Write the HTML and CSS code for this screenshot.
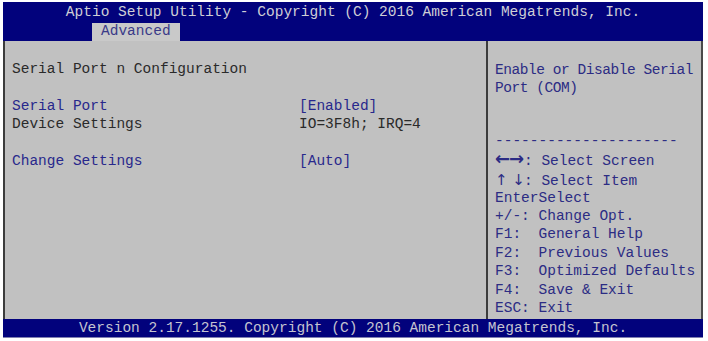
FILE: index.html
```html
<!DOCTYPE html>
<html lang="en">
<head>
  <meta charset="UTF-8">
  <title>Aptio Setup Utility - Serial Port</title>
  <link rel="stylesheet" href="styles.css">
</head>
<body>

<div class="screen">
  <!-- Header -->
  <div class="header">
    <div class="title">Aptio Setup Utility - Copyright (C) 2016 American Megatrends, Inc.</div>
    <div class="tabs">
      <span class="tab">Advanced</span>
    </div>
  </div>

  <!-- Main area -->
  <div class="main">
    <div class="left">
      <div class="line text">Serial Port n Configuration</div>
      <div class="line"></div>
      <div class="line row"><span class="label item">Serial Port</span><span class="value item">[Enabled]</span></div>
      <div class="line row"><span class="label text">Device Settings</span><span class="value text">IO=3F8h; IRQ=4</span></div>
      <div class="line"></div>
      <div class="line row"><span class="label item">Change Settings</span><span class="value item">[Auto]</span></div>
    </div>
    <div class="right">
      <div class="line help">Enable or Disable Serial</div>
      <div class="line help">Port (COM)</div>
      <div class="line gap"></div>
      <div class="line gap"></div>
      <div class="line">---------------------</div>
      <div class="line"><span class="arrows">&larr;&rarr;</span>: Select Screen</div>
      <div class="line tall"><span class="arrows thin">&uarr; &darr;</span>: Select Item</div>
      <div class="line">EnterSelect</div>
      <div class="line">+/-: Change Opt.</div>
      <div class="line">F1:  General Help</div>
      <div class="line">F2:  Previous Values</div>
      <div class="line">F3:  Optimized Defaults</div>
      <div class="line">F4:  Save &amp; Exit</div>
      <div class="line">ESC: Exit</div>
    </div>
  </div>

  <!-- Footer -->
  <div class="footer">Version 2.17.1255. Copyright (C) 2016 American Megatrends, Inc.</div>
</div>

</body>
</html>
```

FILE: styles.css
```css
/* General Styles */
* {
  box-sizing: border-box;
}
body {
  margin: 0;
  background-color: #ffffff;
  font-family: "Liberation Mono", "Courier New", monospace;
  font-size: 14.5px;
}

/* Whole BIOS screen */
.screen {
  width: 700px;
  height: 336px;
  margin: 2px 0 0 3px;
  display: flex;
  flex-direction: column;
}

/* Header */
.header {
  background-color: #02027c;
  height: 39px;
  display: flex;
  flex-direction: column;
}

.title {
  color: #cfcfd6;
  text-align: center;
  line-height: 20px;
}

.tabs {
  padding-left: 89px;
  margin-top: 1px;
}

.tab {
  display: inline-block;
  background-color: #c9c9c9;
  color: #3a3a88;
  height: 18px;
  line-height: 17px;
  padding: 0 9px 0 9px;
}

/* Main panels */
.main {
  flex: 1;
  display: flex;
  background-color: #c1c1c1;
  border-left: 2px solid #3c3c3c;
  border-right: 2px solid #4a4a4a;
}

.left {
  width: 483px;
  padding: 19px 0 0 7px;
  border-right: 2px solid #3c3c3c;
}

.right {
  flex: 1;
  padding: 20px 0 0 7px;
  color: #2c2c84;
}

.line {
  height: 18.4px;
  line-height: 18px;
  white-space: pre;
}

.line.gap {
  height: 17px;
}

.line.tall {
  height: 20px;
  line-height: 22px;
}

.row {
  display: flex;
}

.label {
  width: 287px;
}

.text {
  color: #2a2a2a;
}

.item {
  color: #28288c;
}

.help {
  letter-spacing: -0.45px;
}

.arrows {
  display: inline-block;
  width: 29px;
  font-family: "DejaVu Sans", sans-serif;
  font-size: 18px;
  font-weight: bold;
  letter-spacing: -1px;
}

.arrows.thin {
  font-size: 15px;
  font-weight: normal;
  letter-spacing: 0;
}

/* Footer */
.footer {
  background-color: #02027c;
  color: #c4c4d0;
  height: 19px;
  line-height: 18px;
  text-align: center;
  border-bottom: 1px solid #8080b0;
}
```
